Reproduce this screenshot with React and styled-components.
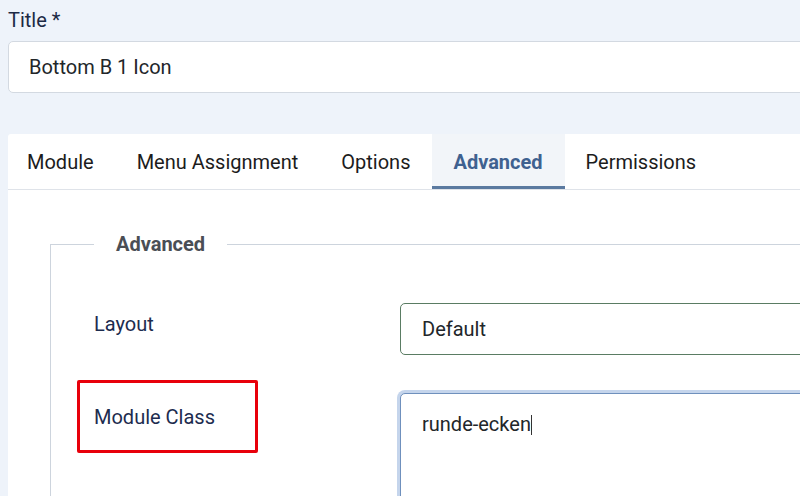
import React from "react";
import styled, { createGlobalStyle } from "styled-components";

const GlobalStyle = createGlobalStyle`
  html, body {
    margin: 0;
    padding: 0;
    background: #eef3fa;
    overflow: hidden;
  }
  body {
    font-family: Roboto, "Liberation Sans", sans-serif;
    font-size: 20px;
    line-height: 30px;
    color: #22262a;
  }
`;

const Page = styled.div`
  width: 1100px;
  padding: 5px 0 0 8px;
`;

const FieldLabel = styled.label`
  display: block;
  color: #1c2a45;
  margin-bottom: 6px;
`;

const TextBox = styled.div`
  box-sizing: border-box;
  height: 52px;
  display: flex;
  align-items: center;
  padding: 0 20px;
  background: #fff;
  border: 1px solid #d3d9e1;
  border-radius: 5px;
  color: #22262a;
`;

const Card = styled.div`
  margin-top: 41px;
  background: #fff;
  border-radius: 3px 3px 0 0;
  height: 400px;
`;

const TabBar = styled.div`
  display: flex;
  height: 55px;
  border-bottom: 1px solid #dfe3e9;
`;

const Tab = styled.div`
  display: flex;
  align-items: center;
  padding: 0 22px 0 ${(p) => (p.$first ? 19 : 21)}px;
  color: ${(p) => (p.$active ? "#3f6190" : "#1c1c1c")};
  font-weight: ${(p) => (p.$active ? 700 : 400)};
  background: ${(p) => (p.$active ? "#f2f5f9" : "transparent")};
  box-shadow: ${(p) => (p.$active ? "inset 0 -3px 0 #5b7aa0" : "none")};
`;

const TabBody = styled.div`
  padding: 39px 0 0 42px;
`;

const Fieldset = styled.fieldset`
  margin: 0;
  padding: 44px 0 40px 43px;
  border: 1px solid #cdd4dd;
  border-right: none;
  border-bottom: none;
  min-width: 0;
`;

const Legend = styled.legend`
  margin: 0;
  padding: 0 22px;
  font-weight: 700;
  color: #4a4e55;
`;

const Row = styled.div`
  display: grid;
  grid-template-columns: 306px 1fr;
  margin-bottom: 38px;
`;

const RowLabel = styled.div`
  position: relative;
  padding-top: ${(p) => p.$offset || 6}px;
  color: #1d2c4f;
`;

const Highlight = styled.div`
  position: absolute;
  left: -17px;
  top: ${(p) => p.$top}px;
  width: 181px;
  height: 73px;
  box-sizing: border-box;
  border: 3px solid #e8000b;
  border-radius: 2px;
`;

const SelectBox = styled(TextBox)`
  padding: 0 21px;
  border-color: #5a7c63;
`;

const TextArea = styled.div`
  box-sizing: border-box;
  height: 140px;
  padding: 15px 21px;
  background: #fff;
  border: 1px solid #6f90bd;
  border-radius: 5px;
  box-shadow: 0 0 0 3px #c5d5ec;
`;

const Caret = styled.span`
  display: inline-block;
  width: 1px;
  height: 20px;
  background: #333;
  vertical-align: -4px;
`;

export default function App() {
  return (
    <Page>
      <GlobalStyle />
      <FieldLabel>Title *</FieldLabel>
      <TextBox>Bottom B 1 Icon</TextBox>

      <Card>
        <TabBar>
          <Tab $first>Module</Tab>
          <Tab>Menu Assignment</Tab>
          <Tab>Options</Tab>
          <Tab $active>Advanced</Tab>
          <Tab>Permissions</Tab>
        </TabBar>

        <TabBody>
          <Fieldset>
            <Legend>Advanced</Legend>
            <Row>
              <RowLabel $offset={6}>Layout</RowLabel>
              <SelectBox>Default</SelectBox>
            </Row>
            <Row>
              <RowLabel $offset={9}>
                Module Class
                <Highlight $top={-13} />
              </RowLabel>
              <TextArea>
                runde-ecken
                <Caret />
              </TextArea>
            </Row>
          </Fieldset>
        </TabBody>
      </Card>
    </Page>
  );
}
